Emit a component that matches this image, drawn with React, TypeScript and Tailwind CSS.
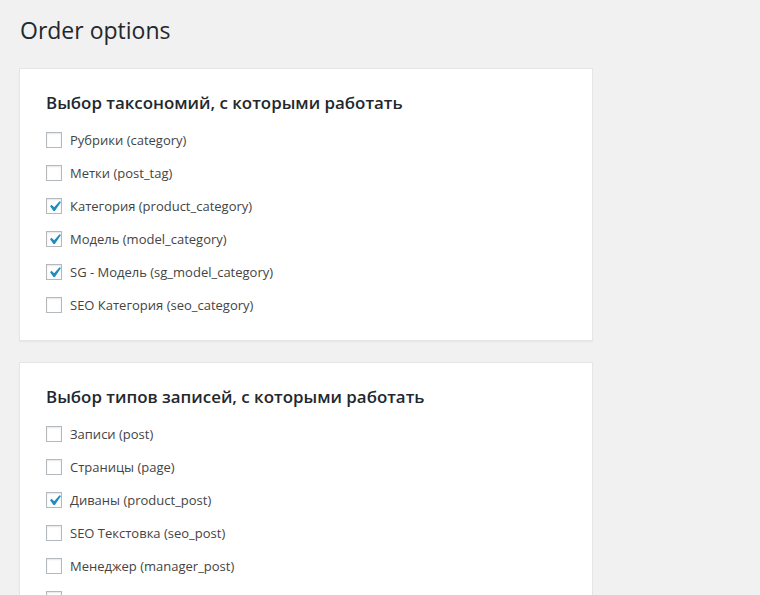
import React from "react";

type Item = { label: string; checked: boolean };

const taxonomies: Item[] = [
  { label: "Рубрики (category)", checked: false },
  { label: "Метки (post_tag)", checked: false },
  { label: "Категория (product_category)", checked: true },
  { label: "Модель (model_category)", checked: true },
  { label: "SG - Модель (sg_model_category)", checked: true },
  { label: "SEO Категория (seo_category)", checked: false },
];

const postTypes: Item[] = [
  { label: "Записи (post)", checked: false },
  { label: "Страницы (page)", checked: false },
  { label: "Диваны (product_post)", checked: true },
  { label: "SEO Текстовка (seo_post)", checked: false },
  { label: "Менеджер (manager_post)", checked: false },
  { label: "Отзывы (review_post)", checked: false },
];

function Checkbox({ checked }: { checked: boolean }) {
  return (
    <span className="relative block w-4 h-4 shrink-0 border border-[#b4b9be] bg-white shadow-[inset_0_1px_2px_rgba(0,0,0,0.1)]">
      {checked && (
        <svg
          className="absolute left-[-3px] top-[-3px]"
          width="21"
          height="21"
          viewBox="0 0 20 20"
          fill="#1e8cbe"
        >
          <path d="M14.83 4.89l1.34.94-5.81 8.38H9.02L5.78 9.67l1.34-1.25 2.57 2.4z" />
        </svg>
      )}
    </span>
  );
}

function Card({ title, items }: { title: string; items: Item[] }) {
  return (
    <div className="w-[574px] bg-white border border-[#e5e5e5] shadow-[0_1px_1px_rgba(0,0,0,0.04)] px-[26px] pt-[22px] pb-[27px]">
      <h2 className="h-[24px] leading-[24px] text-[16.9px] font-semibold text-[#23282d] mb-[17px]">
        {title}
      </h2>
      <div className="flex flex-col gap-[17px]">
        {items.map((it) => (
          <label key={it.label} className="flex items-center h-4 gap-2">
            <Checkbox checked={it.checked} />
            <span className="text-[13px] leading-4 text-[#444] whitespace-nowrap">
              {it.label}
            </span>
          </label>
        ))}
      </div>
    </div>
  );
}

export default function App() {
  return (
    <div
      className="min-h-[595px] bg-[#f1f1f1] pl-[19px] pb-10"
      style={{ fontFamily: '"Open Sans", "Noto Sans", sans-serif' }}
    >
      <h1 className="pt-[16px] h-[45px] text-[23px] leading-[29px] font-normal text-[#23282d] pl-px">
        Order options
      </h1>
      <div className="mt-[23px] flex flex-col gap-[21px]">
        <Card title="Выбор таксономий, с которыми работать" items={taxonomies} />
        <Card title="Выбор типов записей, с которыми работать" items={postTypes} />
      </div>
    </div>
  );
}
